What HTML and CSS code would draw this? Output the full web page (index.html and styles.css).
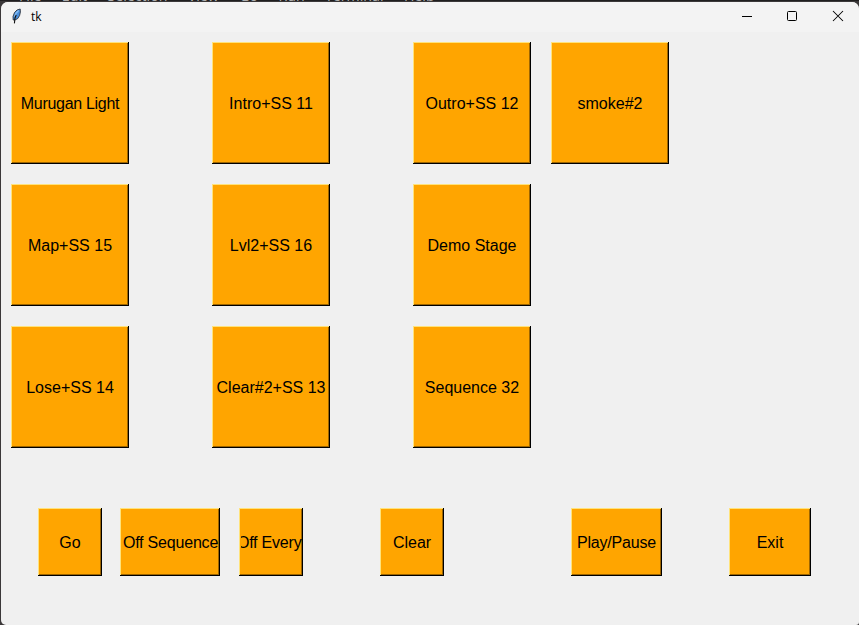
FILE: index.html
```
<!DOCTYPE html>
<html lang="en">
<head>
<meta charset="utf-8">
<title>tk</title>
<link rel="stylesheet" href="styles.css">
</head>
<body>
<nav class="backdrop-menu"><span>File</span><span>Edit</span><span>Selection</span><span>View</span><span>Go</span><span>Run</span><span>Terminal</span><span>Help</span></nav>
<main class="window">
  <header class="titlebar">
    <svg class="feather" width="12" height="16" viewBox="0 0 12 16">
      <path d="M2.2 12 L2 8.5 L3.5 4.5 L6 2 L9.2 1 L9.4 4 L8.6 7.5 L6.8 10.5 L4 12Z" fill="#4a8fdc" stroke="#20252d" stroke-width=".8"/>
      <path d="M3.6 8.5 L4.8 5.5 L7.6 2.5" fill="none" stroke="#8dc3f5" stroke-width="1.1"/>
      <path d="M5.2 7 L4 10 L3.4 15.4" fill="none" stroke="#111" stroke-width="1.1"/>
    </svg>
    <span class="title">tk</span>
    <div class="controls">
      <svg width="12" height="12" viewBox="0 0 12 12"><path d="M1 6.5H11" stroke="#000"/></svg>
      <svg width="12" height="12" viewBox="0 0 12 12"><rect x="1.5" y="1.5" width="9" height="9" rx="1" fill="none" stroke="#000"/></svg>
      <svg width="12" height="12" viewBox="0 0 12 12"><path d="M1 1L11 11M11 1L1 11" stroke="#000" stroke-width="1.05"/></svg>
    </div>
  </header>
  <section class="cues">
    <button class="murugan">Murugan Light</button><button>Intro+SS 11</button><button>Outro+SS 12</button><button>smoke#2</button>
    <button class="first">Map+SS 15</button><button>Lvl2+SS 16</button><button>Demo Stage</button>
    <button class="first">Lose+SS 14</button><button>Clear#2+SS 13</button><button>Sequence 32</button>
  </section>
  <section class="actions">
    <button class="go">Go</button>
    <button class="off-sequence">Off Sequence</button>
    <button class="off-every"><span>Off Every</span></button>
    <button class="clear">Clear</button>
    <button class="play">Play/Pause</button>
    <button class="exit">Exit</button>
  </section>
</main>
</body>
</html>
```
FILE: styles.css
```
* { box-sizing: border-box; }
body {
  margin: 0;
  width: 859px;
  height: 625px;
  overflow: hidden;
  background: linear-gradient(#1f1e1f 1px, #3b3839 1px);
  font-family: "Liberation Sans", Arial, sans-serif;
}
.backdrop-menu {
  display: flex;
  align-items: flex-end;
  gap: 20.4px;
  height: 1px;
  margin-bottom: 1px;
  padding-left: 19px;
  overflow: hidden;
  color: #b0b0b0;
  font: 14.2px/12px "Open Sans", sans-serif;
  white-space: nowrap;
}
.backdrop-menu span { margin-bottom: -1px; }
.window {
  width: 858px;
  height: 623px;
  margin-left: 1px;
  border-radius: 7px 7px 3px 5px;
  overflow: hidden;
  background: #f0f0f0;
}
.titlebar {
  display: flex;
  align-items: center;
  height: 30px;
  padding: 0 15px 0 10px;
  background: #f3f3f3;
}
.feather { display: block; margin-right: 8px; margin-top: -2px; }
.title { font: 12px/16px "Open Sans", sans-serif; color: #000; }
.controls { display: flex; gap: 34px; margin-left: auto; margin-top: -2px; }
.controls svg { display: block; }
.controls svg:first-child { margin-right: -1px; }
.cues {
  display: grid;
  grid-template-columns: 201px 201px 138px 118px;
  grid-auto-rows: 122px;
  row-gap: 20px;
  padding: 10px 0 0 10px;
}
.cues button { width: 118px; }
.cues .first { grid-column-start: 1; }
button {
  display: flex;
  align-items: center;
  justify-content: center;
  flex: none;
  margin: 0;
  padding: 1px 0 0;
  border: 0;
  border-radius: 0;
  background: #ffa500;
  box-shadow: inset -1px -1px #000, inset 1px 1px #ffe37b, inset -2px -2px #9d6500;
  color: #000;
  font: 16px/18px "Liberation Sans", Arial, sans-serif;
  white-space: nowrap;
  overflow: hidden;
}
.cues .murugan { letter-spacing: -.3px; }
.actions { display: flex; padding: 60px 0 0 37px; }
.actions button { height: 68px; }
.go { width: 64px; margin-right: 18px; }
.actions .off-sequence { width: 100px; margin-right: 19px; padding-left: 1px; letter-spacing: -.2px; }
.off-every { width: 64px; margin-right: 77px; }
.off-every span {
  display: flex;
  justify-content: flex-end;
  width: 61px;
  overflow: hidden;
  letter-spacing: -.2px;
}
.clear { width: 64px; margin-right: 127px; }
.actions .play { width: 91px; margin-right: 67px; letter-spacing: -.2px; }
.exit { width: 82px; }
```
